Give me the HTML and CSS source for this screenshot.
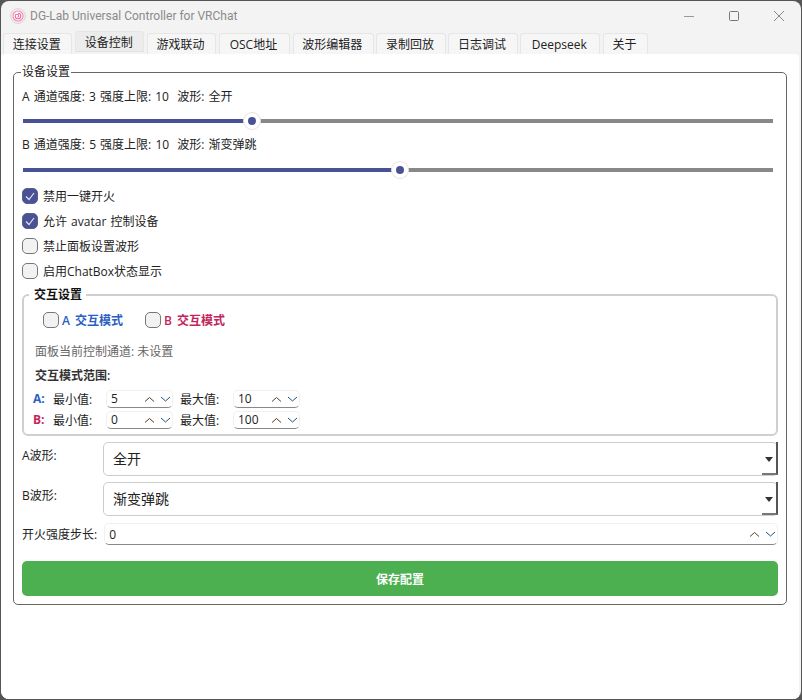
FILE: index.html
```html
<!DOCTYPE html>
<html lang="zh-CN">

<head>
    <meta charset="utf-8">
    <title>DG-Lab Universal Controller for VRChat</title>
    <link rel="stylesheet" href="styles.css">
</head>

<body>
    <div class="window">
        <header class="titlebar">
            <svg class="app-icon" width="16" height="16" viewBox="0 0 16 16">
                <circle cx="8" cy="8" r="7.500" fill="#f0ecec" stroke="#dcd8d8" />
                <circle cx="8" cy="8" r="5" fill="#fff" stroke="#f48fb5" stroke-width="1.200" />
                <path d="M8 5.200a2.800 2.800 0 1 1-2.800 2.800 1.800 1.800 0 0 1 3.600 0 1 1 0 0 1-1.400.9" fill="none" stroke="#ee6f9f" stroke-width="1.100" />
            </svg>
            <span class="title-text">DG-Lab Universal Controller for VRChat</span>
            <div class="win-buttons">
                <svg width="12" height="12" viewBox="0 0 12 12">
                    <path d="M1 6.500h10" stroke="#999" fill="none" />
                </svg>
                <svg width="12" height="12" viewBox="0 0 12 12">
                    <rect x="1.500" y="1.500" width="9" height="9" rx="1" stroke="#777" fill="none" />
                </svg>
                <svg width="12" height="12" viewBox="0 0 12 12">
                    <path d="M1 1l10 10M11 1L1 11" stroke="#888" fill="none" />
                </svg>
            </div>
        </header>

        <nav class="tabs">
            <span class="tab">连接设置</span>
            <span class="tab active">设备控制</span>
            <span class="tab">游戏联动</span>
            <span class="tab">OSC地址</span>
            <span class="tab">波形编辑器</span>
            <span class="tab">录制回放</span>
            <span class="tab">日志调试</span>
            <span class="tab">Deepseek</span>
            <span class="tab">关于</span>
        </nav>

        <main class="panel">
            <fieldset class="group">
                <legend>设备设置</legend>

                <div class="status">A 通道强度: 3 强度上限: 10&nbsp; 波形: 全开</div>
                <div class="slider">
                    <span class="fill" style="width: 222px"></span>
                    <span class="handle"></span>
                    <span class="rest"></span>
                </div>
                <div class="status">B 通道强度: 5 强度上限: 10&nbsp; 波形: 渐变弹跳</div>
                <div class="slider">
                    <span class="fill" style="width: 370px"></span>
                    <span class="handle"></span>
                    <span class="rest"></span>
                </div>

                <div class="checks">
                    <label class="check"><span class="box on"><svg width="12" height="12" viewBox="0 0 12 12"><path d="M2 6.500l3 3 5-6.500" stroke="#dfe3f5" stroke-width="1.200" fill="none" /></svg></span>禁用一键开火</label>
                    <label class="check"><span class="box on"><svg width="12" height="12" viewBox="0 0 12 12"><path d="M2 6.500l3 3 5-6.500" stroke="#dfe3f5" stroke-width="1.200" fill="none" /></svg></span>允许 avatar 控制设备</label>
                    <label class="check"><span class="box"></span>禁止面板设置波形</label>
                    <label class="check"><span class="box"></span>启用ChatBox状态显示</label>
                </div>

                <fieldset class="group inner">
                    <legend>交互设置</legend>
                    <div class="modes">
                        <label class="check mode-a"><span class="box"></span>A 交互模式</label>
                        <label class="check mode-b"><span class="box"></span>B 交互模式</label>
                    </div>
                    <div class="panel-channel">面板当前控制通道: 未设置</div>
                    <div class="range-title">交互模式范围:</div>
                    <div class="range-row">
                        <b class="tag-a">A:</b>
                        <span class="range-label">最小值:</span>
                        <div class="spin small"><span class="spin-value">5</span><svg class="arrows" width="28" height="8" viewBox="0 0 28 8"><path class="up" d="M1 6.500l4.500-4 4.500 4" /><path class="down" d="M17 2l4.500 4 4.500-4" /></svg></div>
                        <span class="range-label max">最大值:</span>
                        <div class="spin small"><span class="spin-value">10</span><svg class="arrows" width="28" height="8" viewBox="0 0 28 8"><path class="up" d="M1 6.500l4.500-4 4.500 4" /><path class="down" d="M17 2l4.500 4 4.500-4" /></svg></div>
                    </div>
                    <div class="range-row">
                        <b class="tag-b">B:</b>
                        <span class="range-label">最小值:</span>
                        <div class="spin small"><span class="spin-value">0</span><svg class="arrows" width="28" height="8" viewBox="0 0 28 8"><path class="up" d="M1 6.500l4.500-4 4.500 4" /><path class="down" d="M17 2l4.500 4 4.500-4" /></svg></div>
                        <span class="range-label max">最大值:</span>
                        <div class="spin small"><span class="spin-value">100</span><svg class="arrows" width="28" height="8" viewBox="0 0 28 8"><path class="up" d="M1 6.500l4.500-4 4.500 4" /><path class="down" d="M17 2l4.500 4 4.500-4" /></svg></div>
                    </div>
                </fieldset>

                <div class="form-row">
                    <span class="form-label">A波形:</span>
                    <div class="combo">全开<span class="drop"></span></div>
                </div>
                <div class="form-row">
                    <span class="form-label">B波形:</span>
                    <div class="combo">渐变弹跳<span class="drop"></span></div>
                </div>
                <div class="step-row">
                    <span class="step-label">开火强度步长:</span>
                    <div class="spin wide"><span class="spin-value">0</span><svg class="arrows" width="28" height="8" viewBox="0 0 28 8"><path class="up" d="M1 6.500l4.500-4 4.500 4" /><path class="down" d="M17 2l4.500 4 4.500-4" /></svg></div>
                </div>

                <button class="save">保存配置</button>
            </fieldset>
        </main>
    </div>
</body>

</html>
```

FILE: styles.css
```css
html,
body {
    margin: 0;
    height: 100%;
    background: #555;
}

body {
    font-family: "Open Sans", "Noto Sans CJK SC", sans-serif;
    font-size: 12px;
    color: #222;
    overflow: hidden;
}

.window {
    box-sizing: border-box;
    height: 698px;
    margin: 1px;
    border-radius: 8px;
    background: #f3f3f3;
    overflow: hidden;
}

.titlebar {
    display: flex;
    align-items: center;
    height: 30px;
    padding-left: 9px;
}

.app-icon {
    margin-right: 4px;
}

.title-text {
    color: #8a8a8a;
    font-family: Roboto, "Noto Sans CJK SC", sans-serif;
    font-size: 12px;
}

.win-buttons {
    display: flex;
    gap: 33px;
    margin-left: auto;
    margin-right: 16px;
}

.tabs {
    display: flex;
    gap: 2.7px;
    height: 23px;
    padding: 0 2px;
    box-sizing: border-box;
}

.tab {
    display: flex;
    align-items: center;
    justify-content: center;
    box-sizing: border-box;
    width: 69.3px;
    height: 21px;
    margin-top: 2px;
    padding-right: 2px;
    border: 1px solid #e6e6e6;
    border-bottom: none;
    border-radius: 3px 3px 0 0;
    background: #f6f6f6;
}

.tab:nth-child(4) {
    width: 71px;
}

.tab:nth-child(5) {
    width: 81px;
}

.tab:nth-child(8) {
    width: 80px;
}

.tab:nth-child(9) {
    width: 45px;
}

.tab.active {
    margin-top: 0;
    background: #ececec;
    border-bottom: 1px solid #e2e2e2;
}

.panel {
    height: 645px;
    margin-right: 2px;
    padding: 10px 12px 0;
    box-sizing: border-box;
    border-radius: 4px 4px 0 0;
    background: #fff;
}

.group {
    margin: 0;
    min-width: 0;
    box-sizing: border-box;
    height: 541px;
    padding: 0 8px;
    border: 1px solid #666;
    border-radius: 5px;
}

.group>legend {
    margin-left: -1px;
    padding: 0 1px;
    line-height: 16px;
}

.status {
    height: 22px;
    margin-top: 4px;
    line-height: 16px;
    word-spacing: 1px;
}

legend+.status {
    height: 21px;
    margin-top: 9px;
}

.slider {
    display: flex;
    align-items: center;
    height: 24px;
    margin: -1px 5px 0 1px;
}

.fill {
    height: 4px;
    background: #4a5296;
}

.rest {
    flex: 1;
    height: 4px;
    background: #888;
}

.handle {
    box-sizing: border-box;
    flex: none;
    width: 16px;
    height: 16px;
    margin: 0 -1px;
    border: 4px solid #fff;
    border-radius: 50%;
    background: #4a5296;
    box-shadow: 0 0 0 1px #e4e4e4;
    position: relative;
}

.checks {
    display: flex;
    flex-direction: column;
    margin-top: 1px;
    word-spacing: 1px;
}

.check {
    display: flex;
    align-items: center;
    gap: 5px;
    height: 25px;
}

.box {
    display: flex;
    align-items: center;
    justify-content: center;
    box-sizing: border-box;
    width: 16px;
    height: 16px;
    border: 1px solid #777;
    border-radius: 5px;
    background: #f2f2f2;
}

.box.on {
    background: #4a5296;
    border-color: #5a5f8e;
}

.inner {
    height: 149px;
    margin: 4px 0 0;
    padding: 0 11px;
    border: 2px solid #cfcfcf;
    border-radius: 6px;
}

.group.inner>legend {
    margin-left: -6px;
    padding: 0 4px 0 5px;
    font-weight: 600;
    color: #111;
}

.modes {
    display: flex;
    gap: 22px;
    margin: 4px 0 0 8px;
    font-weight: 600;
    word-spacing: 2px;
}

.modes .check {
    gap: 3px;
}

.mode-a {
    color: #2b5fc4;
}

.mode-b {
    color: #c2255c;
}

.panel-channel {
    margin-top: 12px;
    line-height: 16px;
    color: #666;
}

.range-title {
    margin: 8px 0 4px;
    line-height: 16px;
    font-weight: 600;
    color: #333;
}

.range-row {
    display: flex;
    align-items: center;
    height: 21px;
    margin-left: -2px;
}

.tag-a {
    width: 20px;
    color: #2b5fc4;
}

.tag-b {
    width: 20px;
    color: #c2255c;
}

.range-label {
    width: 53px;
}

.range-label.max {
    margin-left: 7px;
}

.spin {
    display: flex;
    align-items: center;
    justify-content: space-between;
    box-sizing: border-box;
    height: 18px;
    padding: 0 0 0 4px;
    border: 1px solid #f0f0f0;
    border-bottom: 1px solid #888;
    border-radius: 5px;
    background: #fff;
}

.spin.small {
    width: 67px;
}

.spin.wide {
    flex: 1;
    height: 22px;
}

.arrows {
    fill: none;
    stroke-width: 1;
}

.arrows .up {
    stroke: #5a3a20;
}

.arrows .down {
    stroke: #1f4f86;
}

.form-row {
    display: flex;
    height: 34px;
    margin-top: 6px;
}

.form-label {
    width: 81px;
    padding-top: 6px;
    line-height: 16px;
}

.combo {
    position: relative;
    flex: 1;
    display: flex;
    align-items: center;
    padding: 0 0 2px 9px;
    border: 1px solid #ccc;
    border-radius: 5px;
    font-size: 14px;
    box-sizing: border-box;
}

.drop {
    position: absolute;
    top: -1px;
    right: -1px;
    width: 16px;
    height: 33px;
    border-right: 2px solid #555;
    border-bottom: 2px solid #777;
    box-sizing: border-box;
}

.drop::after {
    content: "";
    position: absolute;
    top: 15px;
    right: 3px;
    border: 4px solid transparent;
    border-top: 5px solid #333;
}

.step-row {
    display: flex;
    align-items: center;
    gap: 7px;
    margin-top: 7px;
}

.save {
    display: block;
    width: 100%;
    height: 35px;
    margin-top: 16px;
    border: none;
    border-radius: 5px;
    background: #4caf50;
    color: #fff;
    font: 600 12px "Open Sans", "Noto Sans CJK SC", sans-serif;
}
```
